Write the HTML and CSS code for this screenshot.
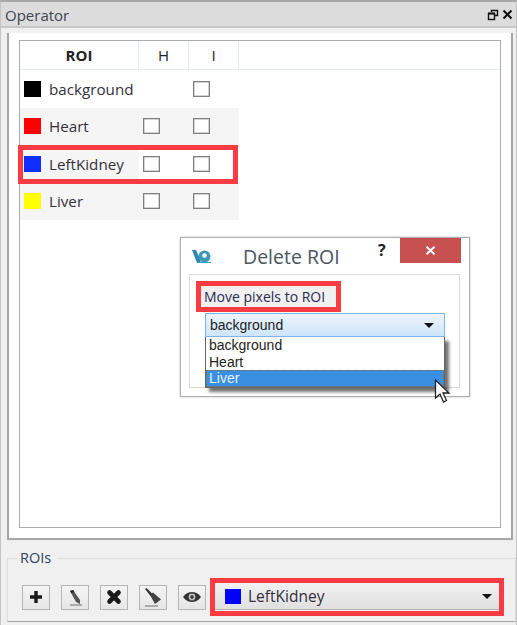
FILE: index.html
```html
<!DOCTYPE html>
<html lang="en">
<head>
  <meta charset="UTF-8" />
  <title>Operator</title>
  <link rel="stylesheet" href="styles.css">
</head>
<body>
  <div class="titlebar">
    <span class="title">Operator</span>
    <span class="title-icons">
      <svg width="12" height="12" viewBox="0 0 12 12"><path d="M4.500 3V1.500h6v5H8" fill="none" stroke="#111" stroke-width="1.400"/><rect x="1.500" y="4.500" width="6" height="6" fill="none" stroke="#111" stroke-width="1.400"/><path d="M1 4.500h7" stroke="#111" stroke-width="2"/></svg>
      <svg width="11" height="11" viewBox="0 0 11 11"><path d="M1.500 1.500l8 8M9.500 1.500l-8 8" stroke="#111" stroke-width="2"/></svg>
    </span>
  </div>

  <div class="panel">
    <div class="inner">
      <div class="table">
        <div class="row head">
          <div class="cell name">ROI</div>
          <div class="cell chk">H</div>
          <div class="cell chk">I</div>
          <div class="cell rest"></div>
        </div>
        <div class="row">
          <div class="cell name"><i class="swatch black"></i>background</div>
          <div class="cell chk"></div>
          <div class="cell chk"><i class="box"></i></div>
        </div>
        <div class="row alt">
          <div class="cell name"><i class="swatch red"></i>Heart</div>
          <div class="cell chk"><i class="box"></i></div>
          <div class="cell chk"><i class="box"></i></div>
        </div>
        <div class="row picked">
          <div class="cell name"><i class="swatch blue"></i>LeftKidney</div>
          <div class="cell chk"><i class="box"></i></div>
          <div class="cell chk"><i class="box"></i></div>
        </div>
        <div class="row alt">
          <div class="cell name"><i class="swatch yellow"></i>Liver</div>
          <div class="cell chk"><i class="box"></i></div>
          <div class="cell chk"><i class="box"></i></div>
        </div>
      </div>

      <div class="dialog">
        <div class="dialog-head">
          <svg class="dialog-logo" width="19" height="15" viewBox="0 0 19 15"><path d="M0 1h4l3 7 2 6H5z" fill="#2f88b4"/><circle cx="12.500" cy="7.500" r="6" fill="#3f97b8"/><path d="M6 14h13v-1H6z" fill="#3f97b8"/><circle cx="12.500" cy="6.500" r="2.200" fill="#fff"/></svg>
          <span class="dialog-title">Delete ROI</span>
          <span class="dialog-help">?</span>
          <span class="dialog-close">
            <svg width="11" height="9" viewBox="0 0 11 9"><path d="M1.500 .8l8 7.400M9.500 .8l-8 7.400" stroke="#fff" stroke-width="2"/></svg>
          </span>
        </div>
        <div class="dialog-body">
          <div class="move-label">Move pixels to ROI</div>
          <div class="dd">
            <div class="dd-current"><span>background</span><i class="caret"></i></div>
            <div class="dd-list">
              <div class="dd-item">background</div>
              <div class="dd-item">Heart</div>
              <div class="dd-item on">Liver</div>
            </div>
          </div>
        </div>
        <svg class="cursor" width="17" height="25" viewBox="0 0 17 25"><path d="M1.500 1v18l4.500-4 3.500 8 3-1.500-3.500-7.500h6z" fill="#fff" stroke="#222" stroke-width="1.300"/></svg>
      </div>
    </div>
  </div>

  <div class="group">
    <span class="group-label">ROIs</span>
    <div class="tools">
      <button class="tool"><svg width="14" height="14" viewBox="0 0 14 14"><path d="M7 1v12M1 7h12" stroke="#1a1a1a" stroke-width="3.400"/></svg></button>
      <button class="tool"><svg width="26" height="23" viewBox="0 0 26 23"><path d="M8 5l3-1 7 10 0 4-4-2z" fill="#555"/><path d="M8 5l3-1 1.500 2-3 1z" fill="#222"/><path d="M8 19h12" stroke="#999" stroke-width="1.500"/></svg></button>
      <button class="tool"><svg width="16" height="16" viewBox="0 0 16 16"><path d="M3.500 3.500l9 9M12.500 3.500l-9 9" stroke="#1a1a1a" stroke-width="4.600" stroke-linecap="round"/></svg></button>
      <button class="tool"><svg width="26" height="23" viewBox="0 0 26 23"><path d="M5 3l1.500-1 6 6-2 2z" fill="#333"/><path d="M10 9l3-2.500 8 7-6 4.500z" fill="#444"/><path d="M5 20h13" stroke="#999" stroke-width="1.500"/></svg></button>
      <button class="tool"><svg width="20" height="12" viewBox="0 0 20 12"><path d="M1 6c3-4 6-5 9-5s6 1 9 5c-3 4-6 5-9 5s-6-1-9-5z" fill="#333"/><circle cx="10" cy="6" r="3.400" fill="#bbb"/><circle cx="10" cy="6" r="1.700" fill="#333"/></svg></button>
      <div class="roi-select">
        <div class="roi-select-inner">
          <i class="swatch pure-blue"></i>
          <span class="roi-select-text">LeftKidney</span>
          <i class="caret"></i>
        </div>
      </div>
    </div>
  </div>
</body>
</html>
```

FILE: styles.css
```css
*, *::after {
  box-sizing: border-box;
}

body {
  margin: 0;
  width: 517px;
  height: 625px;
  overflow: hidden;
  background-color: #f0f0f0;
  font-family: "Open Sans", "Liberation Sans", sans-serif;
  color: #2a2a3a;
  display: flex;
  flex-direction: column;
  border-top: 2px solid #a8a8a8;
  border-left: 1px solid #c4c4c4;
  border-right: 1px solid #c4c4c4;
}

.titlebar {
  height: 26px;
  background-color: #dcdcdc;
  border-bottom: 2px solid #c8c8c8;
  display: flex;
  align-items: center;
  justify-content: space-between;
  padding: 1px 3px 0 4px;
  flex-shrink: 0;
}

.title {
  font-size: 15px;
  color: #40444c;
}

.title-icons {
  display: flex;
  align-items: center;
  gap: 3px;
}

.panel {
  height: 507px;
  margin: 5px 3px 0 6px;
  background-color: #fff;
  border: 2px solid #a6a6a6;
  border-top: none;
  padding: 7px 10px 10px 10px;
  flex-shrink: 0;
}

.inner {
  position: relative;
  height: 100%;
  border: 1px solid #a9adb3;
  background-color: #fff;
}

.row {
  display: flex;
  height: 37.500px;
  align-items: center;
}

.row.head {
  height: 29px;
  border-bottom: 1px solid #e3eaf2;
}

.row.head .cell {
  height: 100%;
  border-right: 1px solid #e3eaf2;
  font-size: 15px;
  color: #222;
}

.row.head .name {
  justify-content: center;
  font-weight: 700;
  padding-left: 0;
}

.row.head .chk {
  justify-content: center;
  padding-left: 0;
}

.row.head .rest {
  border-right: none;
}

.row.alt .cell {
  background-color: #f5f5f5;
}

.cell {
  display: flex;
  align-items: center;
  height: 100%;
}

.name {
  width: 119px;
  padding-left: 4px;
  font-size: 15.200px;
  color: #33303c;
}

.chk {
  width: 50px;
  padding-left: 4px;
}

.row.picked .name {
  background-color: #f5f5f5;
}

.swatch {
  display: block;
  flex-shrink: 0;
  width: 17px;
  height: 16px;
  margin-right: 8px;
}

.black { background-color: #000; }
.red { background-color: #f00; }
.blue { background-color: #0f2dff; }
.yellow { background-color: #ff0; }
.pure-blue { background-color: #00f; }

.box {
  display: block;
  width: 17px;
  height: 16px;
  background-color: #fff;
  border: 1px solid #808080;
  box-shadow: inset 0 0 0 .5px #aaa;
}

/* red callout around the table row */
.row.picked {
  position: relative;
}

.row.picked::after {
  content: "";
  position: absolute;
  left: -2px;
  top: 0;
  width: 220px;
  height: 39px;
  border: 5px solid #fb3b43;
  pointer-events: none;
}

.dialog {
  position: absolute;
  left: 160px;
  top: 196px;
  width: 290px;
  height: 160px;
  background-color: #fff;
  border: 1px solid #adadad;
  box-shadow: 0 0 2px rgba(0, 0, 0, 0.25);
}

.dialog-head {
  position: relative;
  height: 36px;
  display: flex;
  align-items: center;
}

.dialog-logo {
  margin: 0 0 0 11px;
}

.dialog-title {
  margin-left: 32px;
  font-size: 19.500px;
  color: #4a5560;
}

.dialog-help {
  position: absolute;
  left: 197px;
  top: 1px;
  font-size: 16px;
  font-weight: 700;
  color: #222;
}

.dialog-close {
  position: absolute;
  left: 219px;
  top: 0;
  width: 61px;
  height: 25px;
  background-color: #c75050;
  display: flex;
  align-items: center;
  justify-content: center;
}

.dialog-body {
  height: 114px;
  margin: 0 9px 0 8px;
  border: 1px solid #d9d9d9;
  position: relative;
}

.move-label {
  width: 145px;
  height: 31px;
  margin: 6px 0 0 6px;
  padding-left: 3px;
  line-height: 21px;
  border: 5px solid #fb3b43;
  background-color: #f0f0f0;
  font-size: 14px;
  color: #2a2a50;
  white-space: nowrap;
}

.dd {
  position: absolute;
  left: 15px;
  top: 38px;
  width: 240px;
  font-family: "Liberation Sans", sans-serif;
  font-size: 14px;
  color: #222;
}

.dd-current {
  height: 24px;
  padding: 0 10px 0 4px;
  display: flex;
  align-items: center;
  justify-content: space-between;
  border: 1px solid #7eb4ea;
  background: linear-gradient(#ecf4fc, #cfe5fb);
}

.dd-list {
  background-color: #fff;
  border: 1px solid #646464;
  border-top: none;
  box-shadow: 4px 4px 3px rgba(0, 0, 0, 0.55);
}

.dd-item {
  padding-left: 3px;
  height: 16.500px;
  line-height: 16.500px;
}

.dd-item.on {
  background-color: #3b8fe0;
  color: #e6f2ff;
  outline: 1px dotted #8a6a3a;
  outline-offset: -1px;
}

.caret {
  display: block;
  flex-shrink: 0;
  width: 0;
  height: 0;
  border-left: 5px solid transparent;
  border-right: 5px solid transparent;
  border-top: 5px solid #111;
}

.cursor {
  position: absolute;
  left: 253px;
  top: 141px;
}

.group {
  position: relative;
  height: 64px;
  margin: 18px 0 0 6px;
  border: 1px solid #dcdcdc;
  border-bottom-color: #a6a6a6;
  flex-shrink: 0;
}

.group-label {
  position: absolute;
  left: 10px;
  top: -11px;
  padding: 0 6px 0 2px;
  background-color: #f0f0f0;
  font-size: 14.500px;
  color: #33405a;
}

.tools {
  display: flex;
  align-items: center;
  gap: 11px;
  padding: 19px 0 0 14px;
}

.tool {
  width: 28px;
  height: 25px;
  padding: 0;
  border: 1px solid #b5b5b5;
  background: linear-gradient(#f4f4f4, #e6e6e6);
  display: flex;
  align-items: center;
  justify-content: center;
}

.roi-select {
  width: 294px;
  height: 38px;
  margin-left: -7px;
  border: 5px solid #fb3b43;
  background-color: #f0f0f0;
  flex-shrink: 0;
}

.roi-select-inner {
  height: 27px;
  padding: 0 7px 0 10px;
  display: flex;
  align-items: center;
  background: linear-gradient(#f1f1f1, #e0e0e0);
  border-bottom: 1px solid #b4b4b4;
}

.roi-select .swatch {
  width: 16px;
  height: 15px;
  margin-right: 7px;
}

.roi-select-text {
  flex: 1;
  font-size: 15.500px;
  color: #33303c;
}
```
